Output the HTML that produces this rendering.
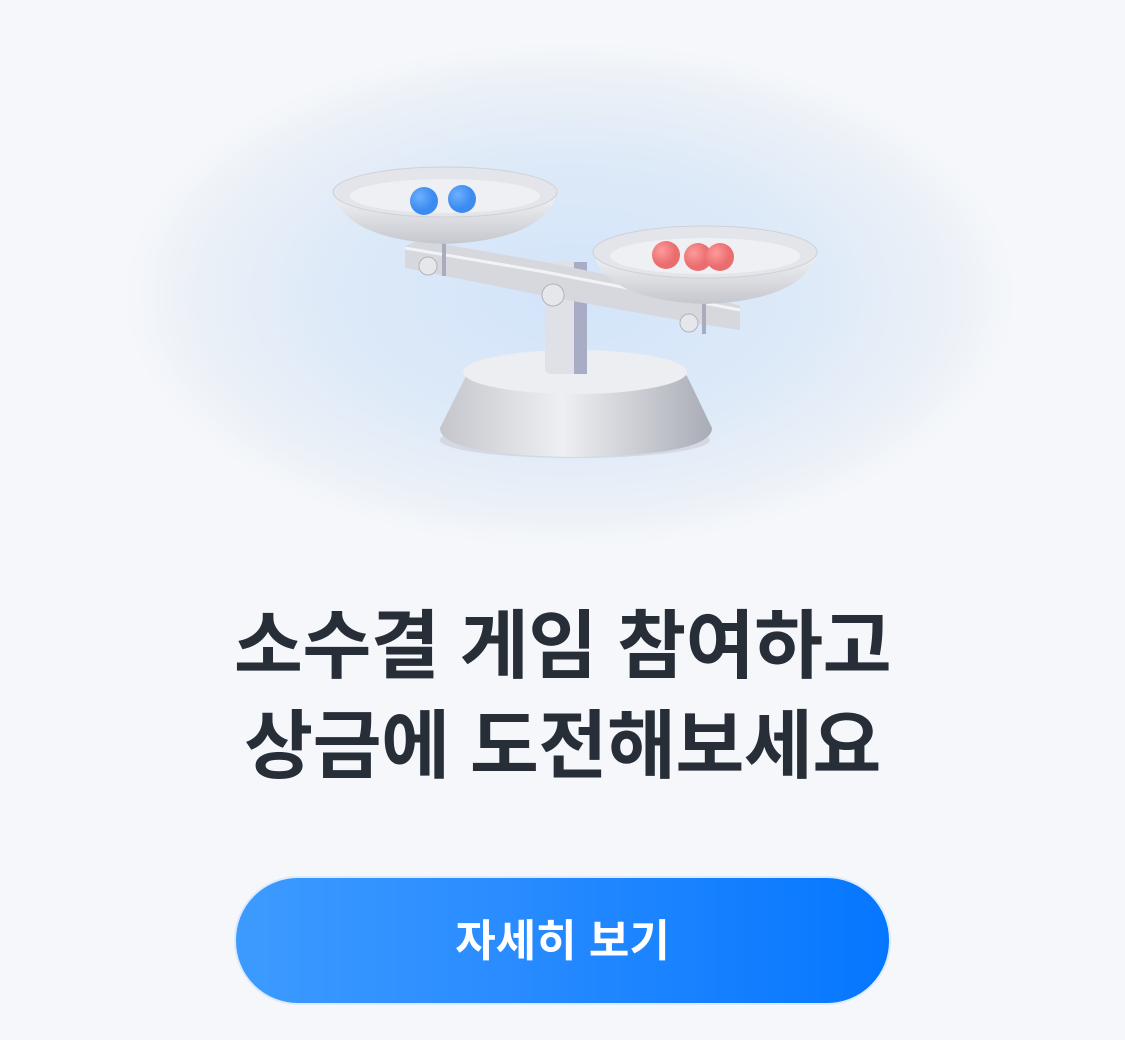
<!DOCTYPE html>
<html><head><meta charset="utf-8"><style>
html,body{margin:0;padding:0;}
body{width:1125px;height:1040px;background:#f5f7fa;position:relative;overflow:hidden;font-family:"Liberation Sans","Noto Sans CJK KR",sans-serif;}
.glow{position:absolute;left:120px;top:40px;width:900px;height:510px;border-radius:50%;background:radial-gradient(ellipse at center,#d3e4fa 0%,#dce9f8 35%,#eaf0f7 58%,rgba(245,247,250,0) 70%);}
h1{position:absolute;left:0;top:596px;width:1125px;margin:0;text-align:center;font-size:75px;line-height:100px;font-weight:700;color:#272e38;letter-spacing:-0.5px;}
.btn{position:absolute;left:234px;top:876px;width:653px;height:125px;border:2px solid #dcebfb;border-radius:64px;background:linear-gradient(90deg,#3d9bff,#2a8cff 40%,#0577ff);color:#fff;font-size:44px;font-weight:700;text-align:center;line-height:128px;}
</style></head><body>
<div class="glow"></div>
<svg style="position:absolute;left:0;top:0" width="1125" height="560" viewBox="0 0 1125 560">
<defs>
<linearGradient id="m" x1="0" x2="1"><stop offset="0" stop-color="#c4c6cc"/><stop offset=".45" stop-color="#eeeff2"/><stop offset="1" stop-color="#a9acb5"/></linearGradient>
<linearGradient id="p" x1="0" y1="0" x2="0" y2="1"><stop offset="0" stop-color="#f4f5f7"/><stop offset="1" stop-color="#c5c7ce"/></linearGradient>
<radialGradient id="b" cx=".35" cy=".35"><stop offset="0" stop-color="#6db0ff"/><stop offset="1" stop-color="#3b8bf0"/></radialGradient>
<radialGradient id="r" cx=".35" cy=".35"><stop offset="0" stop-color="#ff9a9a"/><stop offset="1" stop-color="#ea6d6f"/></radialGradient>
</defs>
<ellipse cx="575" cy="440" rx="135" ry="18" fill="#c9ccd3" opacity=".6"/>
<path d="M465 378 Q470 360 575 352 Q680 360 688 378 L712 428 Q712 455 575 457 Q440 455 440 428 Z" fill="url(#m)"/>
<ellipse cx="575" cy="372" rx="112" ry="22" fill="#eceef1"/>
<rect x="545" y="262" width="42" height="112" rx="6" fill="#dfe1e6"/>
<rect x="574" y="262" width="13" height="112" fill="#a8acc4"/>
<path d="M405 246 L420 240 L545 262 L700 294 L740 306 L740 330 L700 324 L545 296 L405 268 Z" fill="#d6d8de"/>
<path d="M405 248 L545 272 L740 310" stroke="#f2f3f5" stroke-width="3" fill="none"/>
<circle cx="428" cy="266" r="9" fill="#e6e7eb" stroke="#b0b3bb"/>
<circle cx="553" cy="295" r="11" fill="#e6e7eb" stroke="#b0b3bb"/>
<circle cx="689" cy="323" r="9" fill="#e6e7eb" stroke="#b0b3bb"/>
<rect x="442" y="240" width="4" height="36" fill="#a9acbe"/>
<rect x="702" y="296" width="4" height="38" fill="#a9acbe"/>
<path d="M333 192 Q345 240 445 244 Q545 240 557 192 Z" fill="url(#p)"/>
<ellipse cx="445" cy="192" rx="112" ry="25" fill="#e3e5ea" stroke="#cfd1d8"/>
<ellipse cx="445" cy="196" rx="95" ry="17" fill="#eef0f3"/>
<circle cx="424" cy="201" r="14" fill="url(#b)"/>
<circle cx="462" cy="199" r="14" fill="url(#b)"/>
<path d="M593 252 Q605 300 705 304 Q805 300 817 252 Z" fill="url(#p)"/>
<ellipse cx="705" cy="252" rx="112" ry="26" fill="#e3e5ea" stroke="#cfd1d8"/>
<ellipse cx="705" cy="256" rx="95" ry="18" fill="#eef0f3"/>
<circle cx="666" cy="255" r="14" fill="url(#r)"/>
<circle cx="698" cy="257" r="14" fill="url(#r)"/>
<circle cx="720" cy="257" r="14" fill="url(#r)"/>
</svg>
<h1>소수결 게임 참여하고<br>상금에 도전해보세요</h1>
<div class="btn">자세히 보기</div>
</body></html>
